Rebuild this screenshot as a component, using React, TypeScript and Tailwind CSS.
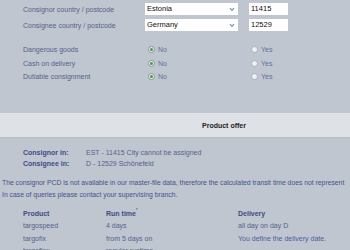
import React from "react";

function Arrow() {
  return (
    <svg width="6" height="5" viewBox="0 0 6 5" className="ml-auto mr-[3px]">
      <path d="M1 1.2 L3 3.4 L5 1.2" fill="none" stroke="#6f8ec4" strokeWidth="1.2" />
    </svg>
  );
}

function Radio({ checked }: { checked?: boolean }) {
  return checked ? (
    <span className="w-[7px] h-[7px] rounded-full border border-[#7f9a86] bg-[#e9efe9] flex items-center justify-center">
      <span className="w-[3px] h-[3px] rounded-full bg-[#4f8a5a]" />
    </span>
  ) : (
    <span className="w-[7px] h-[7px] rounded-full border border-[#a9afb8] bg-[#eef0f3]" />
  );
}

function FieldRow({ label, country, code, extra }: { label: string; country: string; code: string; extra?: string }) {
  return (
    <div className={`flex items-center h-[12px] ${extra ?? ""}`}>
      <div className="w-[122px]">{label}</div>
      <div className="w-[93px] h-[12px] bg-white flex items-center pl-[2px] text-[#111] text-[7.5px]">
        {country}
        <Arrow />
      </div>
      <div className="ml-[11px] w-[39px] h-[12px] bg-white flex items-center pl-[2px] text-[#111] text-[7.5px]">
        {code}
      </div>
    </div>
  );
}

function RadioRow({ label }: { label: string }) {
  return (
    <div className="flex items-center h-[13.5px]">
      <div className="w-[122px]">{label}</div>
      <div className="w-[103px] flex items-center pl-[3px] gap-[3px]">
        <Radio checked />
        <span className="text-[#6070a0]">No</span>
      </div>
      <div className="flex items-center pl-[3px] gap-[3px]">
        <Radio />
        <span className="text-[#6070a0]">Yes</span>
      </div>
    </div>
  );
}

export default function App() {
  return (
    <div className="w-[350px] h-[250px] overflow-hidden bg-[#c0c6cf] font-['Liberation_Sans',Arial,sans-serif] text-[7px] leading-none text-[#55618d] whitespace-nowrap">
      <div className="pl-[23px] pt-[3px]">
        <FieldRow label="Consignor country / postcode" country="Estonia" code="11415" />
        <FieldRow label="Consignee country / postcode" country="Germany" code="12529" extra="mt-[4px]" />
        <div className="mt-[12px]">
          <RadioRow label="Dangerous goods" />
          <RadioRow label="Cash on delivery" />
          <RadioRow label="Dutiable consignment" />
        </div>
      </div>

      <div className="mt-[29.5px] h-[25px] bg-[#dee1e6] border-b border-[#b6bcc5] flex items-center pl-[202px] font-bold text-[#1e1e24]">
        Product offer
      </div>

      <div className="mt-[8.5px] pl-[23px] leading-[11px]">
        <div className="flex">
          <div className="w-[63px] font-bold text-[#3e4b86]">Consignor in:</div>
          <div>EST - 11415 City cannot be assigned</div>
        </div>
        <div className="flex">
          <div className="w-[63px] font-bold text-[#3e4b86]">Consignee in:</div>
          <div>D - 12529 Schönefeld</div>
        </div>
      </div>

      <div className="mt-[8.5px] pl-[2px] leading-[12px] text-[6.8px] text-[#44528c]">
        <div>The consignor PCD is not available in our master-file data, therefore the calculated transit time does not represent</div>
        <div>In case of queries please contact your supervising branch.</div>
      </div>

      <div className="mt-[7px] pl-[23px] leading-[12.3px]">
        <div className="flex font-bold text-[#3e4b86]">
          <div className="w-[83px]">Product</div>
          <div className="w-[132px]">
            Run time<sup className="text-[4px] align-super">*</sup>
          </div>
          <div>Delivery</div>
        </div>
        <div className="flex">
          <div className="w-[83px]">targospeed</div>
          <div className="w-[132px]">4 days</div>
          <div>all day on day D</div>
        </div>
        <div className="flex">
          <div className="w-[83px]">targofix</div>
          <div className="w-[132px]">from 5 days on</div>
          <div className="text-[#4a5ea0]">You define the delivery date.</div>
        </div>
        <div className="flex">
          <div className="w-[83px]">targoflex</div>
          <div className="w-[132px]">regular runtime</div>
          <div></div>
        </div>
      </div>
    </div>
  );
}
